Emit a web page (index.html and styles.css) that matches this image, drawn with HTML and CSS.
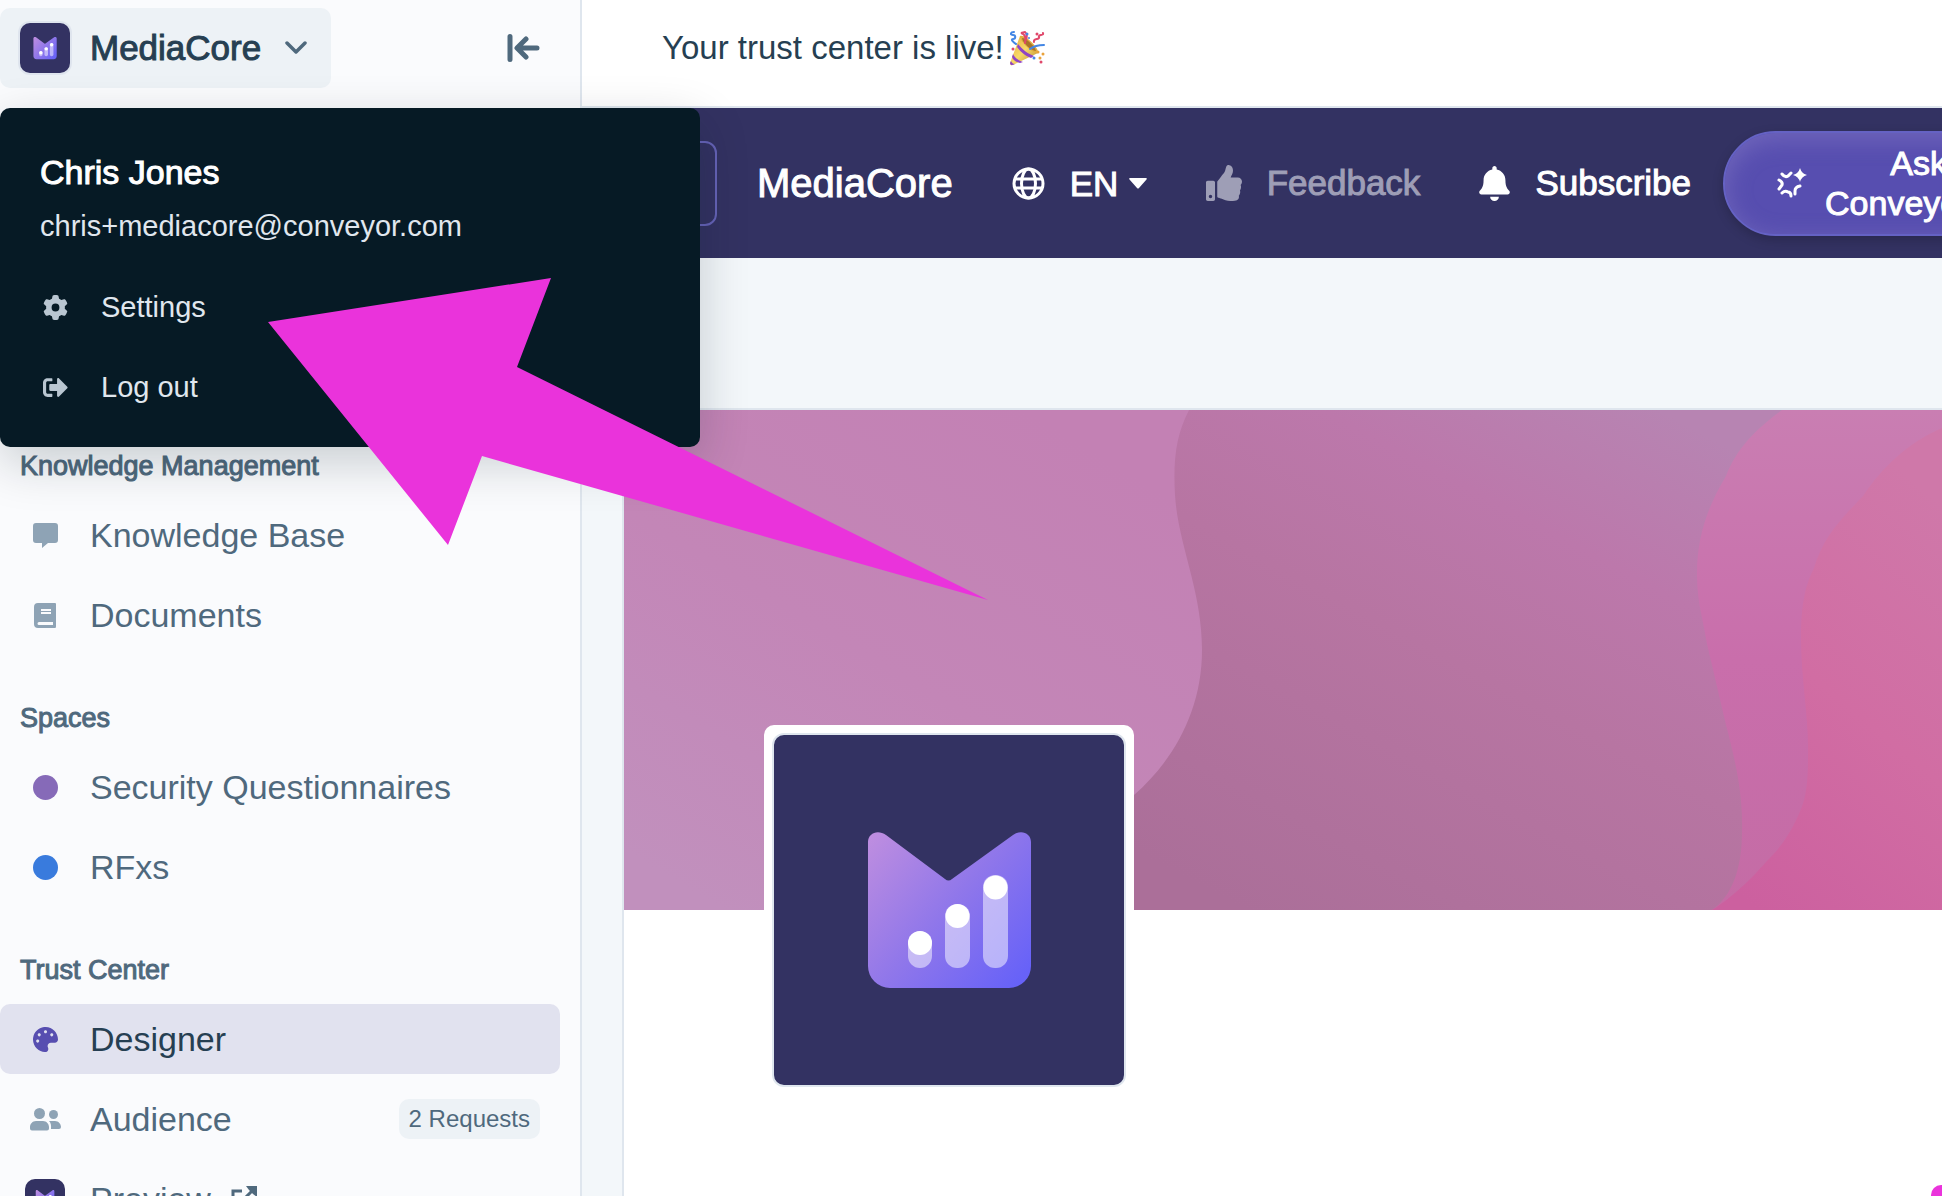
FILE: index.html
```html
<!DOCTYPE html>
<html lang="en">
<head>
    <meta charset="UTF-8">
    <meta name="viewport" content="width=device-width, initial-scale=1.0">
    <title>MediaCore Trust Center</title>
    <link rel="stylesheet" href="styles.css">
</head>
<body>
    <!-- Shared logo symbol -->
    <svg class="defs" width="0" height="0" aria-hidden="true">
        <defs>
            <linearGradient id="logoFill" gradientUnits="userSpaceOnUse" x1="94" y1="107" x2="250" y2="240">
                <stop offset="0" stop-color="#bd8de0"/>
                <stop offset="0.5" stop-color="#9077ea"/>
                <stop offset="1" stop-color="#6762f8"/>
            </linearGradient>
            <symbol id="logo" viewBox="0 0 350 350">
                <path fill="url(#logoFill)" d="M94 107c0-9 10-13 18-7l59 44q3.500 3 7 0l61-44c8-6 18-2 18 7v124a22 22 0 0 1-22 22H116a22 22 0 0 1-22-22z"/>
                <g fill="#fff" fill-opacity="0.5">
                    <rect x="134" y="196" width="24" height="37" rx="12"/>
                    <rect x="171" y="169" width="25" height="64" rx="12"/>
                    <rect x="209" y="140" width="25" height="93" rx="12"/>
                </g>
                <g fill="#fff">
                    <circle cx="146" cy="208" r="12"/>
                    <circle cx="183.500" cy="181" r="12"/>
                    <circle cx="221.500" cy="152.500" r="12"/>
                </g>
            </symbol>
        </defs>
    </svg>

    <div class="app">
        <aside class="sidebar">
            <div class="sidebar-top">
                <button class="workspace" aria-expanded="true">
                    <span class="tile"><svg><use href="#logo"/></svg></span>
                    MediaCore
                    <svg class="chevron" width="22" height="14" viewBox="0 0 22 14"><path d="M2 2l9 9 9-9" fill="none" stroke="#4f697d" stroke-width="3.500" stroke-linecap="round" stroke-linejoin="round"/></svg>
                </button>
                <button class="collapse" aria-label="Collapse sidebar">
                    <svg width="33" height="28" viewBox="0 0 33 28" fill="none" stroke="#4f697d" stroke-width="5" stroke-linecap="round" stroke-linejoin="round"><path d="M3 2.500v23M19 5l-9 9 9 9M11 14h19"/></svg>
                </button>
            </div>

            <nav class="nav">
                <h2>Knowledge Management</h2>
                <a href="#" class="nav-item">
                    <span class="icon"><svg width="25" height="25" viewBox="0 0 25 25"><path d="M3 0h19a3 3 0 0 1 3 3v14a3 3 0 0 1-3 3h-7l-6 5v-5H3a3 3 0 0 1-3-3V3a3 3 0 0 1 3-3z"/></svg></span>
                    Knowledge Base
                </a>
                <a href="#" class="nav-item">
                    <span class="icon"><svg width="22" height="25" viewBox="0 0 22 25"><path fill-rule="evenodd" d="M4 0h17a1 1 0 0 1 1 1v22.500q0 1.500-1 1.500H4a4 4 0 0 1-4-4V4a4 4 0 0 1 4-4zM7 6v2h10V6zM7 9v2h10V9zM5 19a1.500 1.500 0 0 0 0 3h14v-3z"/></svg></span>
                    Documents
                </a>

                <h2>Spaces</h2>
                <a href="#" class="nav-item">
                    <span class="icon"><span class="dot purple"></span></span>
                    Security Questionnaires
                </a>
                <a href="#" class="nav-item">
                    <span class="icon"><span class="dot blue"></span></span>
                    RFxs
                </a>

                <h2>Trust Center</h2>
                <a href="#" class="nav-item active">
                    <span class="icon"><svg width="25" height="25" viewBox="0 0 512 512"><path d="M204.300 5C104.900 24.400 24.800 104.300 5.200 203.400c-37 187 131.700 326.400 258.800 306.700 41.200-6.400 61.400-54.600 42.500-91.700-23.100-45.400 9.900-98.400 60.900-98.400h79.700c35.800 0 64.800-29.600 64.900-65.300C511.500 97.100 368.100-26.900 204.300 5zM96 320c-17.700 0-32-14.300-32-32s14.300-32 32-32 32 14.300 32 32-14.300 32-32 32zm32-128c-17.700 0-32-14.300-32-32s14.300-32 32-32 32 14.300 32 32-14.300 32-32 32zm128-64c-17.700 0-32-14.300-32-32s14.300-32 32-32 32 14.300 32 32-14.300 32-32 32zm128 64c-17.700 0-32-14.300-32-32s14.300-32 32-32 32 14.300 32 32-14.300 32-32 32z"/></svg></span>
                    Designer
                </a>
                <a href="#" class="nav-item">
                    <span class="icon"><svg width="31" height="23" viewBox="0 0 31 23"><circle cx="9.500" cy="5.500" r="5.500"/><circle cx="23.500" cy="6.500" r="4.500"/><path d="M6 13h7c3.500 0 6 3 6 6v1.500a2 2 0 0 1-2 2H2a2 2 0 0 1-2-2V19c0-3 2.500-6 6-6zM19 13h6c3.500 0 6 3 6 6a2 2 0 0 1-2 2h-8c.3-3.500 0-6-2-8z"/></svg></span>
                    Audience
                    <span class="badge">2 Requests</span>
                </a>
                <a href="#" class="nav-item">
                    <span class="icon"><span class="tile small"><svg><use href="#logo"/></svg></span></span>
                    Preview
                    <svg class="external" width="26" height="26" viewBox="0 0 26 26"><path fill="none" stroke="#4f697d" stroke-width="3" d="M11 5H2v19h19v-9M9 17L21 5"/><path d="M15 0h11v11l-4-3-4-4z"/></svg>
                </a>
            </nav>
        </aside>

        <main class="main">
            <div class="topbar">
                Your trust center is live!
                <svg width="35" height="35" viewBox="0 0 35 35" role="img" aria-label="Party popper">
                    <defs>
                        <linearGradient id="cone" x1="0" y1="0" x2="1" y2="1">
                            <stop offset="0" stop-color="#e0a93a"/>
                            <stop offset="0.5" stop-color="#f8d968"/>
                            <stop offset="1" stop-color="#b3862a"/>
                        </linearGradient>
                    </defs>
                    <path fill="url(#cone)" d="M10 5c5 1 15 10 18 17L3 34c-2 1-3 0-3-2z"/>
                    <path fill="#8f45c4" d="M8 13c4 5 10 10 16 12l-3 2C15 25 10 20 7 16zM3 23c2 4 6 7 10 8l-3 1c-4-1-7-3-8-6zM1 30c1 2 2 3 4 3-3 2-5 1-5-1z"/>
                    <path fill="#e0ae40" d="M10 5c-1 4 12 18 18 17 1-5-13-19-18-17z"/>
                    <path fill="#a8742a" d="M12 7c0 4 9 13 14 13-1-5-10-13-14-13z"/>
                    <g fill="none" stroke-width="2" stroke-linecap="round">
                        <path stroke="#e0486b" d="M15 12c1-5 0-9-4-10l4-1c3 2 2 5 1 8M33 2c1 3-5 1-4 4s-6 1-5 5"/>
                        <path stroke="#4386e4" d="M20 18c4-3 8-4 14-4M4 1c-4 0-4 3-1 3s3 4 0 4 1 4 3 5"/>
                    </g>
                    <g fill="#e0486b"><circle cx="27" cy="3" r="1.500"/><circle cx="3" cy="18" r="1.500"/><circle cx="31" cy="31" r="1.500"/></g>
                    <g fill="#e9a23c"><circle cx="33" cy="23" r="1.500"/><circle cx="30" cy="27" r="1.500"/><circle cx="28" cy="21" r="1.500"/></g>
                    <g fill="#4386e4"><circle cx="17" cy="3" r="1.500"/><circle cx="24" cy="27" r="1.500"/><circle cx="19" cy="7" r="1"/></g>
                </svg>
            </div>

            <header class="tc-header">
                <input class="tc-search" type="text" aria-label="Search">
                <span class="tc-name">MediaCore</span>
                <label class="tc-link lang">
                    <svg width="33" height="33" viewBox="0 0 33 33" fill="none" stroke="#fff" stroke-width="3" aria-label="Language"><circle cx="16.500" cy="16.500" r="14.500"/><ellipse cx="16.500" cy="16.500" rx="7" ry="14.500"/><path d="M3 12h27M3 21h27"/></svg>
                    <select>
                        <option>EN</option>
                    </select>
                    <svg class="caret" width="18" height="11" viewBox="0 0 18 11"><path fill="#fff" d="M1 0h16c1 0 1 1 .5 1.500l-7.500 8.500q-1 1-2 0L.5 1.500C0 1 0 0 1 0z"/></svg>
                </label>
                <a href="#" class="tc-link muted">
                    <svg width="36" height="36" viewBox="0 0 512 512" fill="#9e9eb6"><path d="M104 224H24c-13.255 0-24 10.745-24 24v240c0 13.255 10.745 24 24 24h80c13.255 0 24-10.745 24-24V248c0-13.255-10.745-24-24-24zM64 472c-13.255 0-24-10.745-24-24s10.745-24 24-24 24 10.745 24 24-10.745 24-24 24zM384 81.452c0 42.416-25.970 66.208-33.277 94.548h101.723c33.397 0 59.397 27.746 59.553 58.098.084 17.938-7.546 37.249-19.439 49.197l-.110.110c9.836 23.337 8.237 56.037-9.308 79.469 8.681 25.895-.069 57.704-16.382 74.757 4.298 17.598 2.244 32.575-6.148 44.632C440.202 511.587 389.616 512 346.839 512l-2.845-.001c-48.287-.017-87.806-17.598-119.560-31.725-15.957-7.099-36.821-15.887-52.651-16.178-6.540-.120-11.783-5.457-11.783-11.998v-213.770c0-3.200 1.282-6.271 3.558-8.521 39.614-39.144 56.648-80.587 89.117-113.111 14.804-14.832 20.188-37.236 25.393-58.902C282.515 39.293 291.817 0 312 0c24 0 72 8 72 81.452z"/></svg>
                    Feedback
                </a>
                <a href="#" class="tc-link">
                    <svg width="31" height="35" viewBox="0 0 448 512" fill="#fff"><path d="M224 512c35.320 0 63.970-28.650 63.970-64H160.030c0 35.350 28.650 64 63.970 64zm215.390-149.710c-19.320-20.760-55.470-51.990-55.470-154.290 0-77.700-54.480-139.900-127.940-155.160V32c0-17.670-14.320-32-31.980-32s-31.980 14.330-31.980 32v20.840C118.560 68.100 64.080 130.300 64.080 208c0 102.300-36.150 133.530-55.470 154.290-6 6.450-8.660 14.160-8.610 21.710.110 16.400 12.980 32 32.100 32h383.800c19.120 0 32-15.600 32.100-32 .050-7.550-2.610-15.270-8.610-21.710z"/></svg>
                    Subscribe
                </a>
                <button class="ask">
                    <svg width="30" height="30" viewBox="0 0 30 30"><path fill="#fff" d="M23 0q1.500 5.500 7 7-5.500 1.500-7 7-1.500-5.500-7-7 5.500-1.500 7-7z"/><path fill="none" stroke="#fff" stroke-width="3" stroke-linecap="round" d="M5 6q3 4 6 2l3-3M2 12q4 2 3 5l-3 4M5 25q3-3 6-1 3 0 3 4M18 26v-3q0-4 5-5"/></svg>
                    <span>Ask<br>Conveyor&nbsp;AI</span>
                </button>
            </header>

            <section class="panel">
                <svg class="banner" viewBox="0 0 1318 500" preserveAspectRatio="xMinYMin slice" aria-hidden="true">
                    <defs>
                        <linearGradient id="base" gradientUnits="userSpaceOnUse" x1="660" y1="520" x2="960" y2="-40">
                            <stop offset="0" stop-color="#ab6f99"/>
                            <stop offset="0.5" stop-color="#b775a2"/>
                            <stop offset="0.75" stop-color="#bc78ab"/>
                            <stop offset="1" stop-color="#b784b2"/>
                        </linearGradient>
                        <linearGradient id="left" gradientUnits="userSpaceOnUse" x1="100" y1="500" x2="400" y2="0">
                            <stop offset="0" stop-color="#c190bd"/>
                            <stop offset="0.5" stop-color="#c386b7"/>
                            <stop offset="1" stop-color="#c381b4"/>
                        </linearGradient>
                        <linearGradient id="pink" x1="0" y1="0" x2="0" y2="1">
                            <stop offset="0" stop-color="#c97eb2"/>
                            <stop offset="0.5" stop-color="#c96eab"/>
                            <stop offset="1" stop-color="#c46ca5"/>
                        </linearGradient>
                        <linearGradient id="rose" x1="0.6" y1="0" x2="0.2" y2="1">
                            <stop offset="0" stop-color="#cf78a9"/>
                            <stop offset="0.5" stop-color="#d16da3"/>
                            <stop offset="1" stop-color="#cc609f"/>
                        </linearGradient>
                    </defs>
                    <rect width="1318" height="500" fill="url(#base)"/>
                    <path fill="url(#left)" d="M0 0h565C552 25 549 50 551 85c3 50 27 95 27 155 0 60-28 110-68 145-40 38-75 65-90 115H0z"/>
                    <path fill="url(#pink)" d="M1158 0c-27 20-45 38-56 66-18 30-29 60-29 97 0 30 6 45 10 71l19 81c10 38 17 70 16 106 0 38-10 65-30 79h230V0z"/>
                    <path fill="url(#rose)" d="M1318 18c-35 15-60 40-79 68-24 25-40 42-49 72-10 20-13 40-13 71 0 40 8 80 7 116 0 30-2 45-10 61-10 22-20 34-32 46-12 14-34 36-54 48h230z"/>
                </svg>
                <div class="company-logo">
                    <div class="company-logo-inner"><svg><use href="#logo"/></svg></div>
                </div>
            </section>
        </main>
    </div>

    <div class="user-menu">
        <strong>Chris Jones</strong>
        <span class="email">chris+mediacore@conveyor.com</span>
        <a href="#" class="menu-item">
            <svg width="25" height="25" viewBox="0 0 512 512"><path d="M495.9 166.6c3.2 8.7 .5 18.4-6.4 24.6l-43.3 39.4c1.1 8.3 1.7 16.8 1.7 25.4s-.6 17.1-1.7 25.4l43.3 39.4c6.9 6.2 9.6 15.9 6.4 24.6c-4.4 11.9-9.7 23.3-15.8 34.3l-4.7 8.1c-6.6 11-14 21.4-22.1 31.2c-5.9 7.2-15.7 9.6-24.5 6.8l-55.7-17.7c-13.4 10.3-28.2 18.9-44 25.4l-12.500 57.100c-2 9.100-9 16.300-18.200 17.800c-13.800 2.300-28 3.500-42.500 3.500s-28.700-1.200-42.500-3.500c-9.200-1.500-16.200-8.700-18.200-17.800l-12.500-57.100c-15.800-6.500-30.600-15.100-44-25.400L83.100 425.900c-8.800 2.800-18.600 .3-24.500-6.800c-8.100-9.800-15.500-20.200-22.100-31.200l-4.700-8.100c-6.100-11-11.400-22.400-15.800-34.300c-3.200-8.700-.5-18.400 6.400-24.600l43.300-39.400C64.600 273.100 64 264.600 64 256s.6-17.100 1.700-25.400L22.400 191.200c-6.900-6.200-9.600-15.900-6.400-24.600c4.400-11.900 9.700-23.300 15.800-34.300l4.700-8.100c6.600-11 14-21.400 22.100-31.200c5.900-7.200 15.700-9.600 24.500-6.800l55.700 17.700c13.400-10.300 28.200-18.900 44-25.400l12.500-57.100c2-9.100 9-16.300 18.200-17.800C227.300 1.200 241.500 0 256 0s28.700 1.200 42.500 3.500c9.200 1.500 16.200 8.700 18.200 17.800l12.500 57.100c15.800 6.500 30.600 15.100 44 25.400l55.700-17.700c8.800-2.800 18.600-.3 24.500 6.800c8.100 9.800 15.500 20.200 22.100 31.200l4.700 8.100c6.100 11 11.400 22.400 15.800 34.300zM256 336a80 80 0 1 0 0-160 80 80 0 1 0 0 160z"/></svg>
            Settings
        </a>
        <a href="#" class="menu-item">
            <svg width="25" height="25" viewBox="0 0 512 512"><path d="M497 273L329 441c-15 15-41 4.500-41-17v-96H152c-13.300 0-24-10.700-24-24v-96c0-13.300 10.700-24 24-24h136V88c0-21.400 25.900-32 41-17l168 168c9.300 9.400 9.300 24.600 0 34zM192 436v-40c0-6.600-5.400-12-12-12H96c-17.700 0-32-14.300-32-32V160c0-17.700 14.300-32 32-32h84c6.600 0 12-5.400 12-12V76c0-6.600-5.400-12-12-12H96c-53 0-96 43-96 96v192c0 53 43 96 96 96h84c6.600 0 12-5.400 12-12z"/></svg>
            Log out
        </a>
    </div>

    <!-- Pointer towards Settings -->
    <svg class="pointer" width="720" height="322" viewBox="0 0 720 322" aria-hidden="true"><path fill="#ea33db" d="M0 44L283 0 249 89 720 322 214 178 180 267z"/></svg>
    <span class="corner-mark"></span>
</body>
</html>
```

FILE: styles.css
```css
* {
    box-sizing: border-box;
}
body {
    margin: 0;
    font-family: "Liberation Sans", Arial, sans-serif;
    font-size: 34px;
    color: #263f52;
    background-color: #ffffff;
    overflow: hidden;
}
a {
    color: inherit;
    text-decoration: none;
}
button {
    font: inherit;
    color: inherit;
    border: none;
    background: none;
    padding: 0;
    cursor: pointer;
}
svg {
    display: block;
    flex-shrink: 0;
}
.defs {
    position: absolute;
}
.app {
    display: flex;
    height: 100vh;
    overflow: hidden;
}

/* Sidebar */
.sidebar {
    width: 582px;
    flex-shrink: 0;
    background-color: #fafbfd;
    border-right: 2px solid #dfe6ee;
    overflow: hidden;
}
.sidebar-top {
    display: flex;
    align-items: center;
    justify-content: space-between;
    padding: 8px 40px 0 0;
}
.workspace {
    display: flex;
    align-items: center;
    gap: 20px;
    height: 80px;
    padding: 0 24px 0 20px;
    border-radius: 10px;
    background-color: #edf2f6;
    font-size: 35px;
    -webkit-text-stroke: 1px currentColor;
}
.tile {
    display: flex;
    width: 50px;
    height: 50px;
    border-radius: 10px;
    background-color: #333262;
    box-shadow: 0 0 0 2px #dfe5ee;
}
.tile svg {
    width: 100%;
    height: 100%;
}
.tile.small {
    width: 40px;
    height: 40px;
    box-shadow: none;
}
.chevron {
    margin-left: 4px;
}
.nav {
    padding: 360px 20px 0 0;
}
.nav h2 {
    margin: 50px 0 16px 20px;
    font-size: 27px;
    line-height: 36px;
    font-weight: normal;
    color: #4f697d;
    -webkit-text-stroke: 1px currentColor;
}
.nav h2:first-child {
    margin-top: 0;
}
.nav-item {
    display: flex;
    align-items: center;
    gap: 20px;
    height: 70px;
    margin-bottom: 10px;
    padding: 0 20px;
    border-radius: 10px;
    color: #4f697d;
    fill: #8ea3b5;
}
.nav-item.active {
    background-color: #e1e2ef;
    color: #263f52;
    fill: #574eb0;
}
.icon {
    display: flex;
    align-items: center;
    justify-content: center;
    width: 50px;
}
.dot {
    width: 25px;
    height: 25px;
    border-radius: 50%;
}
.purple {
    background-color: #866ab8;
}
.blue {
    background-color: #397bdd;
}
.badge {
    margin-left: auto;
    padding: 0 10px;
    border-radius: 10px;
    background-color: #edf2f6;
    font-size: 24px;
    line-height: 40px;
}
.external {
    fill: #4f697d;
}

/* Main area */
.main {
    flex: 1;
    min-width: 0;
    display: flex;
    flex-direction: column;
    background-color: #f3f7fa;
}
.topbar {
    display: flex;
    align-items: center;
    gap: 6px;
    flex-shrink: 0;
    height: 108px;
    padding: 0 80px 10px;
    border-bottom: 2px solid #dfe6ee;
    background-color: #ffffff;
    font-size: 33px;
}
.tc-header {
    display: flex;
    align-items: center;
    flex-shrink: 0;
    height: 150px;
    padding-left: 40px;
    overflow: hidden;
    background-color: #333262;
    color: #ffffff;
    font-size: 35px;
    -webkit-text-stroke: 1px currentColor;
}
.tc-search {
    width: 95px;
    height: 85px;
    flex-shrink: 0;
    padding: 0 20px;
    border: 2px solid #6562b6;
    border-radius: 12px;
    background: transparent;
    font: inherit;
    color: inherit;
}
.tc-name {
    margin-left: 40px;
    font-size: 40px;
}
.tc-link {
    display: flex;
    align-items: center;
    gap: 25px;
    flex-shrink: 0;
    margin-left: 59px;
}
.tc-link.muted {
    color: #9e9eb6;
}
.lang select {
    appearance: none;
    padding: 0;
    border: none;
    background: transparent;
    font: inherit;
    color: inherit;
    -webkit-text-stroke: inherit;
}
.lang .caret {
    margin-left: -15px;
}
.ask {
    display: flex;
    align-items: center;
    gap: 18px;
    flex-shrink: 0;
    height: 105px;
    margin-left: 32px;
    padding: 0 52px;
    border: 2px solid #6562c4;
    border-radius: 53px;
    background-color: #574eb0;
    box-shadow: inset 0 6px 24px rgba(160, 150, 210, 0.35), 0 4px 12px rgba(0, 0, 0, 0.2);
    font-size: 34px;
    line-height: 40px;
    text-align: center;
    -webkit-text-stroke: 1px currentColor;
}
.panel {
    flex: 1;
    margin: 150px 0 0 40px;
    border-top: 2px solid #dfe6ee;
    border-left: 2px solid #dfe6ee;
    background-color: #ffffff;
}
.banner {
    width: 100%;
    height: 500px;
}
.company-logo {
    position: relative;
    width: 370px;
    margin: -185px 0 0 140px;
    padding: 8px;
    border-radius: 10px;
    background-color: #ffffff;
}
.company-logo-inner {
    border: 2px solid #dfe6ee;
    border-radius: 12px;
    background-color: #333262;
}
.company-logo-inner svg {
    width: 100%;
    height: 350px;
}

/* User menu popover */
.user-menu {
    position: absolute;
    top: 108px;
    left: 0;
    width: 700px;
    padding: 40px 40px 20px;
    border-radius: 10px;
    background-color: #061a25;
    box-shadow: 0 16px 50px rgba(6, 26, 37, 0.2);
    color: #e0e7ee;
}
.user-menu strong {
    display: block;
    font-size: 34px;
    line-height: 48px;
    font-weight: normal;
    color: #ffffff;
    -webkit-text-stroke: 1px currentColor;
}
.email {
    display: block;
    margin: 6px 0 17px;
    font-size: 29px;
    line-height: 48px;
}
.menu-item {
    display: flex;
    align-items: center;
    gap: 33px;
    height: 80px;
    padding-left: 3px;
    font-size: 29px;
    fill: #b9c6d1;
}
.pointer {
    position: absolute;
    top: 278px;
    left: 268px;
}
.corner-mark {
    position: absolute;
    right: 0;
    bottom: 0;
    width: 11px;
    height: 11px;
    border-top-left-radius: 10px;
    background-color: #ea33db;
}
```
